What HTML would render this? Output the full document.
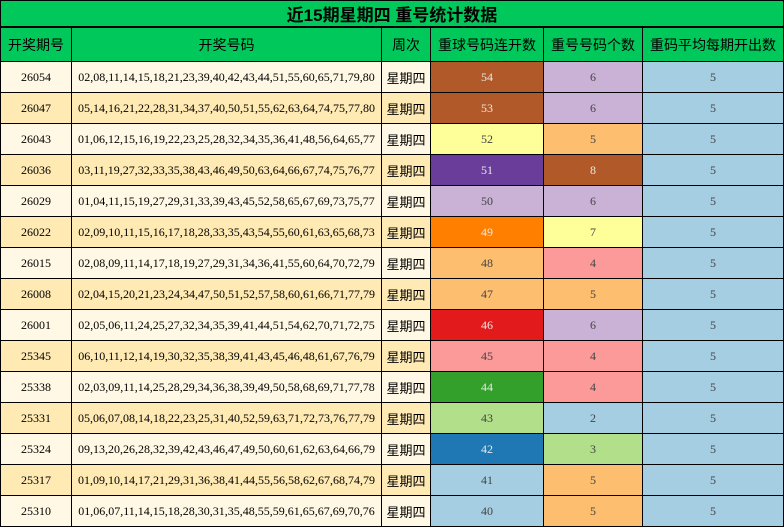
<!DOCTYPE html><html><head><meta charset="utf-8"><style>
body{margin:0;width:784px;height:528px;overflow:hidden;background:#fff;font-family:"Liberation Serif","Noto Sans CJK SC",serif}
.c{position:absolute;box-sizing:border-box;border-left:1px solid #000;border-bottom:1px solid #000;display:flex;align-items:center;justify-content:center;white-space:nowrap}
.t{position:absolute;left:0;top:0;width:784px;height:28px;background:#00c85a;border:1px solid #000;border-bottom:2px solid #000;box-sizing:border-box;display:flex;align-items:center;justify-content:center;font:bold 17px "Liberation Sans","Noto Sans CJK SC",sans-serif}
.h{background:#00c85a;font:14px "Noto Sans CJK SC",sans-serif}
.k{font-family:"Noto Sans CJK SC",sans-serif;font-size:13px}
.n{font-size:12px}
</style></head><body>
<div class="t">近15期星期四 重号统计数据</div>
<div id="g"></div>
<script>
var X=[0,71,381,430,543,642,784];
var H=["开奖期号","开奖号码","周次","重球号码连开数","重号号码个数","重码平均每期开出数"];
var P={b:"#b15928",l:"#cab2d6",s:"#a6cee3",y:"#ffff99",o:"#fdbf6f",p:"#6a3d9a",O:"#ff7f00",r:"#fb9a99",R:"#e31a1c",G:"#33a02c",g:"#b2df8a",B:"#1f78b4"};
var dark="bpORGB";
var D=[["26054","02,08,11,14,15,18,21,23,39,40,42,43,44,51,55,60,65,71,79,80","54b","6l"],
["26047","05,14,16,21,22,28,31,34,37,40,50,51,55,62,63,64,74,75,77,80","53b","6l"],
["26043","01,06,12,15,16,19,22,23,25,28,32,34,35,36,41,48,56,64,65,77","52y","5o"],
["26036","03,11,19,27,32,33,35,38,43,46,49,50,63,64,66,67,74,75,76,77","51p","8b"],
["26029","01,04,11,15,19,27,29,31,33,39,43,45,52,58,65,67,69,73,75,77","50l","6l"],
["26022","02,09,10,11,15,16,17,18,28,33,35,43,54,55,60,61,63,65,68,73","49O","7y"],
["26015","02,08,09,11,14,17,18,19,27,29,31,34,36,41,55,60,64,70,72,79","48o","4r"],
["26008","02,04,15,20,21,23,24,34,47,50,51,52,57,58,60,61,66,71,77,79","47o","5o"],
["26001","02,05,06,11,24,25,27,32,34,35,39,41,44,51,54,62,70,71,72,75","46R","6l"],
["25345","06,10,11,12,14,19,30,32,35,38,39,41,43,45,46,48,61,67,76,79","45r","4r"],
["25338","02,03,09,11,14,25,28,29,34,36,38,39,49,50,58,68,69,71,77,78","44G","4r"],
["25331","05,06,07,08,14,18,22,23,25,31,40,52,59,63,71,72,73,76,77,79","43g","2s"],
["25324","09,13,20,26,28,32,39,42,43,46,47,49,50,60,61,62,63,64,66,79","42B","3g"],
["25317","01,09,10,14,17,21,29,31,36,38,41,44,55,56,58,62,67,68,74,79","41s","5o"],
["25310","01,06,07,11,14,15,18,28,30,31,35,48,55,59,61,65,67,69,70,76","40s","5o"]];
var h="";
function cell(i,y,hh,cls,bg,col,txt){var w=X[i+1]-X[i];h+='<div class="c '+cls+'" style="left:'+X[i]+'px;top:'+y+'px;width:'+w+'px;height:'+hh+'px;background:'+bg+';color:'+col+(i==5?';border-right:1px solid #000':'')+'">'+txt+'</div>';}
for(var i=0;i<6;i++)cell(i,28,34,"h","#00c85a","#000",H[i]);
D.forEach(function(r,j){var y=62+31*j,bg=j%2?"#ffeab3":"#fff8e4";
cell(0,y,31,"n",bg,"#000",r[0]);cell(1,y,31,"n",bg,"#000",r[1]);cell(2,y,31,"k",bg,"#000","星期四");
[r[2],r[3],"5s"].forEach(function(v,k){var c=v.slice(-1),t=v.slice(0,-1);cell(3+k,y,31,"n",P[c],dark.indexOf(c)>=0?"#e8e8e8":"#444",t);});});
document.getElementById("g").innerHTML=h;
</script></body></html>
